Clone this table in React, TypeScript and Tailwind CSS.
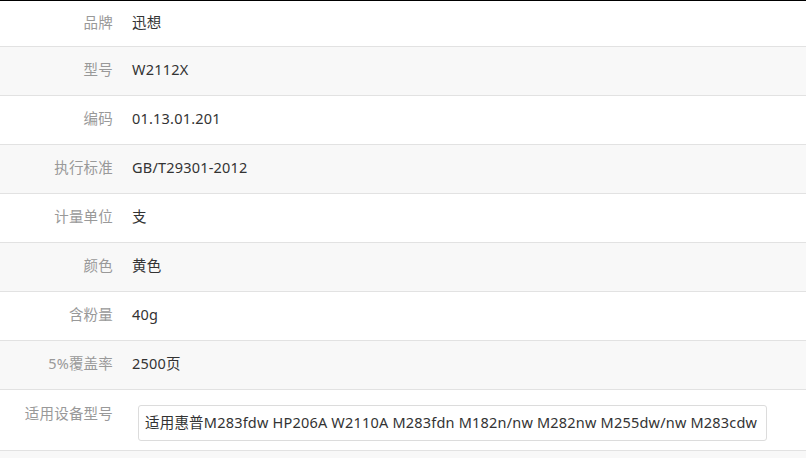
const ROWS: { label: string; value: string }[] = [
  { label: "品牌", value: "迅想" },
  { label: "型号", value: "W2112X" },
  { label: "编码", value: "01.13.01.201" },
  { label: "执行标准", value: "GB/T29301-2012" },
  { label: "计量单位", value: "支" },
  { label: "颜色", value: "黄色" },
  { label: "含粉量", value: "40g" },
  { label: "5%覆盖率", value: "2500页" },
];

const FONT = "font-['Noto_Sans','Noto_Sans_CJK_SC',sans-serif]";

export default function App() {
  return (
    <div className={`h-[458px] w-[809px] overflow-hidden bg-white text-[14.5px] tracking-[0.2px] ${FONT}`}>
      <div className="w-[806px] border-t border-black">
        {ROWS.map((r, i) => (
          <div
            key={r.label}
            className={`flex items-center border-b border-[#e2e2e2] pb-[2px] ${
              i === 0 ? "h-[46px]" : "h-[49px]"
            } ${i % 2 === 1 ? "bg-[#f8f8f8]" : "bg-white"}`}
          >
            <div className="w-[113px] text-right text-[#999]">{r.label}</div>
            <div className="pl-[19px] text-[#333]">{r.value}</div>
          </div>
        ))}
        <div className="flex h-[61px] items-start border-b border-[#e2e2e2] bg-white pt-[15px]">
          <div className="-mt-[2px] w-[113px] text-right text-[#999]">适用设备型号</div>
          <div className="pl-[25px]">
            <div className="flex h-[36px] w-[629px] items-center rounded-[3px] border border-[#dcdcdc] px-[6px] text-[#333]">
              适用惠普M283fdw HP206A W2110A M283fdn M182n/nw M282nw M255dw/nw M283cdw
            </div>
          </div>
        </div>
        <div className="h-[20px] bg-[#f8f8f8]" />
      </div>
    </div>
  );
}
